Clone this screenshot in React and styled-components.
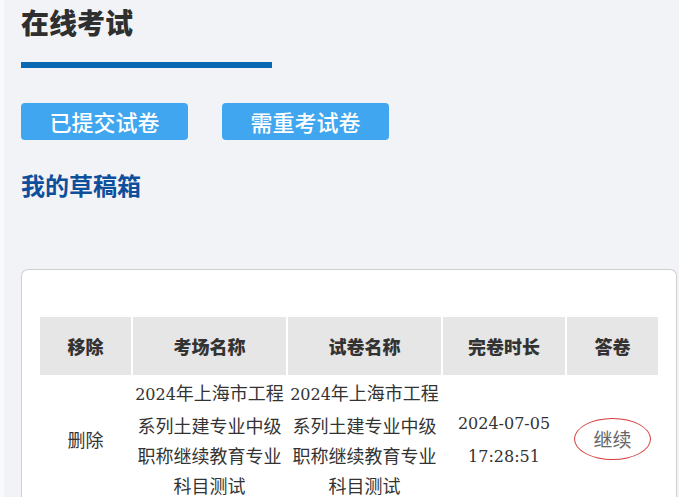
import styled, { createGlobalStyle } from 'styled-components';

const GlobalStyle = createGlobalStyle`
  html, body {
    margin: 0;
    padding: 0;
    background: #f2f3f6;
  }
  body {
    font-family: "Noto Sans CJK SC", "Noto Sans", sans-serif;
  }
`;

const Page = styled.div`
  min-height: 497px;
  box-sizing: border-box;
  border-left: 4px solid #f9fafb;
  padding: 0 2px 0 17px;
`;

const Title = styled.h1`
  margin: 0;
  padding-top: 3px;
  font-size: 28px;
  line-height: 38px;
  font-weight: 900;
  color: #2f2f2f;
`;

const TitleBar = styled.div`
  margin-top: 21px;
  width: 251px;
  height: 6px;
  background: #0b68b2;
`;

const Tabs = styled.div`
  display: flex;
  gap: 34px;
  margin-top: 35px;
`;

const TabButton = styled.button`
  width: 167px;
  height: 37px;
  border: none;
  border-radius: 4px;
  background: #40a6ef;
  color: #fff;
  font-family: "Noto Sans CJK SC", sans-serif;
  font-size: 22px;
  font-weight: 500;
  line-height: 37px;
  padding: 0;
  cursor: pointer;
`;

const Subtitle = styled.h2`
  margin: 28px 0 0;
  font-size: 24px;
  line-height: 34px;
  font-weight: 700;
  color: #0e4f9c;
`;

const Card = styled.div`
  margin-top: 67px;
  background: #fff;
  border: 1.5px solid #cfcfcf;
  border-bottom: none;
  border-radius: 7px 7px 0 0;
  padding: 47px 16px 20px 16px;
`;

const Table = styled.table`
  width: 622px;
  border-collapse: separate;
  border-spacing: 2px 0;
  font-family: "Noto Sans CJK SC", sans-serif;
  color: #333;
  table-layout: fixed;
`;

const Th = styled.th`
  width: ${(p) => p.$w}px;
  height: 58px;
  background: #e6e6e6;
  font-size: 18px;
  font-weight: 900;
  color: #333;
  padding: 0;
`;

const Td = styled.td`
  padding: 2px 0 0;
  text-align: center;
  vertical-align: middle;
  font-size: 18px;
  line-height: 30px;
  color: #333;
`;

const Num = styled.span`
  font-family: "DejaVu Serif", "Liberation Serif", serif;
  font-size: 16px;
`;

const Continue = styled.span`
  display: inline-flex;
  align-items: center;
  justify-content: center;
  width: 75px;
  height: 40px;
  border: 1px solid #d83a3a;
  border-radius: 50%;
  color: #666;
  font-size: 19px;
`;

const columns = [
  { label: '移除', w: 91 },
  { label: '考场名称', w: 153 },
  { label: '试卷名称', w: 153 },
  { label: '完卷时长', w: 122 },
  { label: '答卷', w: 91 },
];

const drafts = [
  {
    id: 1,
    room: ['2024年上海市工程', '系列土建专业中级', '职称继续教育专业', '科目测试'],
    paper: ['2024年上海市工程', '系列土建专业中级', '职称继续教育专业', '科目测试'],
    time: ['2024-07-05', '17:28:51'],
  },
];

// digits are set in a serif face, the rest in the CJK face
const Text = ({ value }) =>
  value
    .split(/([\d:-]+)/)
    .filter(Boolean)
    .map((part, i) => (/^[\d:-]+$/.test(part) ? <Num key={i}>{part}</Num> : part));

const Lines = ({ lines }) =>
  lines.map((l, i) => (
    <span key={i}>
      <Text value={l} />
      {i < lines.length - 1 && <br />}
    </span>
  ));

const App = () => {
  return (
    <>
      <GlobalStyle />
      <Page>
        <Title>在线考试</Title>
        <TitleBar />
        <Tabs>
          <TabButton>已提交试卷</TabButton>
          <TabButton>需重考试卷</TabButton>
        </Tabs>
        <Subtitle>我的草稿箱</Subtitle>
        <Card>
          <Table>
            <thead>
              <tr>
                {columns.map((c) => (
                  <Th key={c.label} $w={c.w}>
                    {c.label}
                  </Th>
                ))}
              </tr>
            </thead>
            <tbody>
              {drafts.map((d) => (
                <tr key={d.id}>
                  <Td>删除</Td>
                  <Td>
                    <Lines lines={d.room} />
                  </Td>
                  <Td>
                    <Lines lines={d.paper} />
                  </Td>
                  <Td>
                    <Lines lines={d.time} />
                  </Td>
                  <Td>
                    <Continue>继续</Continue>
                  </Td>
                </tr>
              ))}
            </tbody>
          </Table>
        </Card>
      </Page>
    </>
  );
};

export default App;
